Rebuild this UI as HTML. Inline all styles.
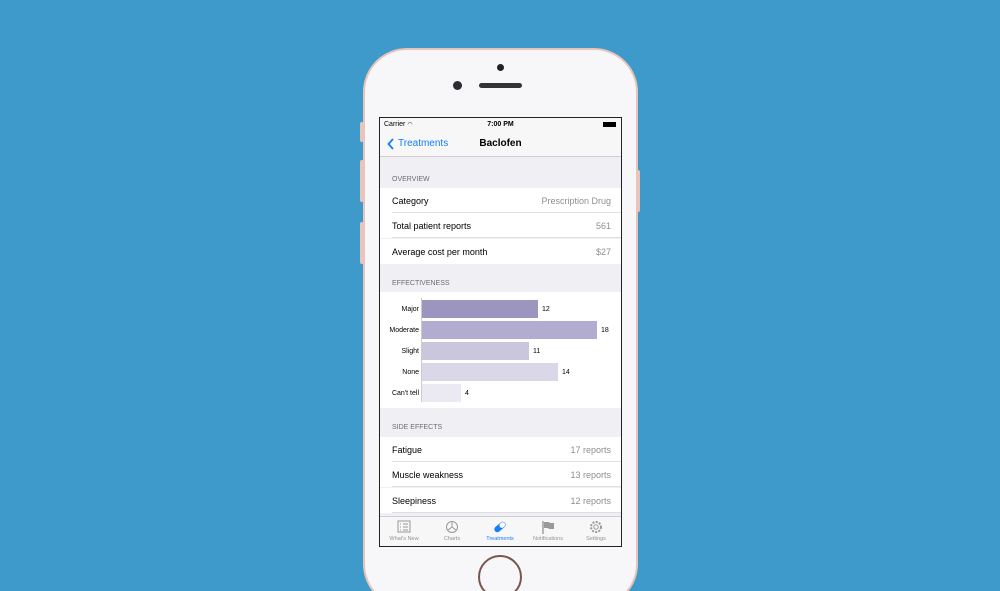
<!DOCTYPE html><html style="overflow:hidden;height:591px"><head><style>
body{margin:0;width:1000px;height:591px;background:#3e9aca;position:relative;overflow:hidden;font-family:"Liberation Sans",sans-serif}
.phone{position:absolute;left:363px;top:48px;width:275px;height:560px;border-radius:44px;background:#f7f7f9;border:2px solid #e9c4bb;box-sizing:border-box}
.btn{position:absolute;background:#e9c4bb;width:4px;border-radius:2px}
.scr{position:absolute;left:379px;top:117px;width:243px;height:430px;background:#efeff4;border:1.5px solid #222;box-sizing:border-box;overflow:hidden;font-size:9px;color:#000}
.a{position:absolute}
.row{position:absolute;left:0;width:100%;height:25px;background:#fff}
.row span{position:absolute;left:12px;top:8px}
.row b{position:absolute;right:10px;top:8px;font-weight:normal;color:#8e8e93}
.row i{position:absolute;left:12px;right:0;bottom:0;border-bottom:1px solid #e0e0e4}
.hd{position:absolute;left:12px;font-size:7px;color:#6d6d72}
.bar{position:absolute;left:42px;height:18px}
.lb{position:absolute;right:202px;font-size:7px;text-align:right}
.vl{position:absolute;font-size:7px}
.tab{position:absolute;top:0;width:48px;text-align:center;font-size:5.5px;color:#929292}
</style></head><body>
<div class="phone"></div>
<div class="btn" style="left:360px;top:122px;height:20px"></div>
<div class="btn" style="left:360px;top:160px;height:42px"></div>
<div class="btn" style="left:360px;top:222px;height:42px"></div>
<div class="btn" style="left:636px;top:170px;height:42px"></div>
<div class="a" style="left:497px;top:64px;width:7px;height:7px;border-radius:50%;background:#222"></div>
<div class="a" style="left:453px;top:81px;width:9px;height:9px;border-radius:50%;background:#2b2b33"></div>
<div class="a" style="left:479px;top:83px;width:43px;height:5px;border-radius:3px;background:#333"></div>
<div class="a" style="left:478px;top:555px;width:44px;height:44px;border-radius:50%;border:2px solid #7a5550;box-sizing:border-box;background:#f7f7f9"></div>
<div class="scr">
<div class="a" style="left:0;top:0;width:100%;height:38px;background:#f7f7f7;border-bottom:1px solid #d0d0d4"></div>
<div class="a" style="left:4px;top:3px;font-size:7px">Carrier <span style="font-size:6px">◠</span></div>
<div class="a" style="left:0;width:100%;top:3px;text-align:center;font-size:7px;font-weight:bold">7:00 PM</div>
<div class="a" style="right:5px;top:4px;width:13px;height:5px;background:#000"></div>
<svg class="a" style="left:7px;top:20px" width="8" height="12"><path d="M6 1L1.5 6 6 11" stroke="#147efb" stroke-width="1.8" fill="none"/></svg>
<div class="a" style="left:18px;top:20px;font-size:10px;color:#147efb">Treatments</div>
<div class="a" style="left:0;width:100%;top:20px;text-align:center;font-size:10px;font-weight:bold">Baclofen</div>
<div class="hd" style="top:58px">OVERVIEW</div>
<div class="row" style="top:70px"><span>Category</span><b>Prescription Drug</b><i></i></div>
<div class="row" style="top:95px"><span>Total patient reports</span><b>561</b><i></i></div>
<div class="row" style="top:121px"><span>Average cost per month</span><b>$27</b></div>
<div class="hd" style="top:162px">EFFECTIVENESS</div>
<div class="a" style="left:0;top:174px;width:100%;height:116px;background:#fff"></div>
<div class="a" style="left:41px;top:180px;width:1px;height:104px;background:#ccc"></div>
<div class="lb" style="top:188px">Major</div><div class="bar" style="top:182px;width:116px;background:#9b95c0"></div><div class="vl" style="left:162px;top:188px">12</div>
<div class="lb" style="top:209px">Moderate</div><div class="bar" style="top:203px;width:175px;background:#b1acd0"></div><div class="vl" style="left:221px;top:209px">18</div>
<div class="lb" style="top:230px">Slight</div><div class="bar" style="top:224px;width:107px;background:#c9c6de"></div><div class="vl" style="left:153px;top:230px">11</div>
<div class="lb" style="top:251px">None</div><div class="bar" style="top:245px;width:136px;background:#dad8e8"></div><div class="vl" style="left:182px;top:251px">14</div>
<div class="lb" style="top:272px">Can't tell</div><div class="bar" style="top:266px;width:39px;background:#ebeaf3"></div><div class="vl" style="left:85px;top:272px">4</div>
<div class="hd" style="top:306px">SIDE EFFECTS</div>
<div class="row" style="top:319px"><span>Fatigue</span><b>17 reports</b><i></i></div>
<div class="row" style="top:344px"><span>Muscle weakness</span><b>13 reports</b><i></i></div>
<div class="row" style="top:370px"><span>Sleepiness</span><b>12 reports</b><i></i></div>
<div class="a" style="left:0;top:398px;width:100%;height:32px;background:#f7f7f7;border-top:1px solid #d0d0d4">
<div class="tab" style="left:0"><svg width="14" height="14" style="margin-top:3px"><rect x="1" y="1" width="12" height="11" fill="none" stroke="#999"/><path d="M3 4h1M6 4h5M3 7h1M6 7h5M3 10h1M6 10h5" stroke="#999"/></svg><br>What's New</div>
<div class="tab" style="left:48px"><svg width="14" height="14" style="margin-top:3px"><circle cx="7" cy="7" r="5.5" fill="none" stroke="#999"/><path d="M7 7V1.5M7 7l4 3M7 7l-4 3" stroke="#999"/></svg><br>Charts</div>
<div class="tab" style="left:96px;color:#147efb"><svg width="14" height="14" style="margin-top:3px"><g transform="rotate(-40 7 7)"><rect x="0.5" y="4" width="13" height="6" rx="3" fill="#147efb"/><rect x="7" y="4.5" width="6" height="5" rx="2.5" fill="#fff"/></g></svg><br>Treatments</div>
<div class="tab" style="left:144px"><svg width="14" height="14" style="margin-top:3px"><path d="M2 1v13" stroke="#999" stroke-width="1.4"/><path d="M3 2h5l1 1h4v6H8l-1-1H3z" fill="#999"/></svg><br>Notifications</div>
<div class="tab" style="left:192px"><svg width="14" height="14" style="margin-top:3px"><circle cx="7" cy="7" r="5" fill="none" stroke="#999" stroke-width="2" stroke-dasharray="2 1.3"/><circle cx="7" cy="7" r="2.2" fill="none" stroke="#999"/></svg><br>Settings</div>
</div>
</div>
</body></html>
